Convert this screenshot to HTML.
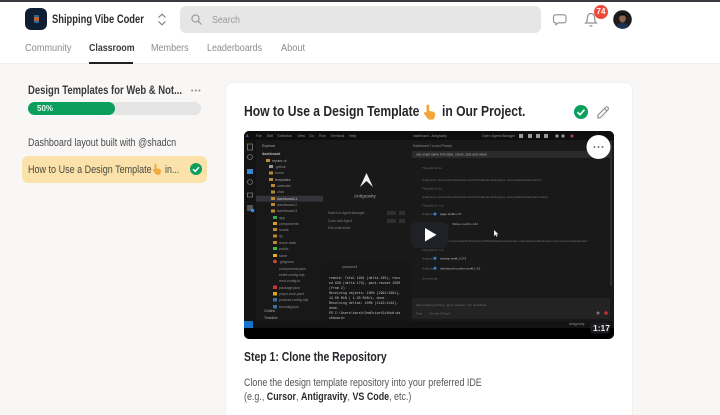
<!DOCTYPE html>
<html><head><meta charset="utf-8"><style>
*{box-sizing:border-box}
html,body{margin:0;padding:0;width:720px;height:415px;overflow:hidden;background:#f8f7f5;font-family:"Liberation Sans",sans-serif}
#w{position:absolute;left:0;top:0;width:720px;height:415px;overflow:hidden;filter:blur(.3px)}
.t{position:absolute;white-space:nowrap;transform-origin:0 50%;line-height:14px;height:14px}
.a{position:absolute}
svg{position:absolute;overflow:visible}
b{font-weight:700}
</style></head><body><div id="w">
<div class="a" style="left:0;top:0;width:720px;height:64px;background:#fff;border-bottom:1px solid #efefed"></div>
<div class="a" style="left:0;top:0;width:720px;height:1.5px;background:#3a3a40"></div>
<div class="a" style="left:25px;top:8px;width:22px;height:22px;border-radius:6px;background:#101e33"></div>
<div class="a" style="left:33.500px;top:17px;width:5px;height:4px;background:#b9623a;box-shadow:0 -2px 0 #2d6390,0 2px 0 #2d6390"></div>
<div class="t" style="left:52px;top:12px;font-size:12px;font-weight:700;color:#2b2b2e;transform:scaleX(.78)">Shipping Vibe Coder</div>
<svg style="left:157px;top:13px" width="10" height="13" fill="none" stroke="#777" stroke-width="1.100"><path d="M1.500 4.500 5 1.200 8.500 4.500M1.500 8.500 5 11.800 8.500 8.500"/></svg>
<div class="a" style="left:180px;top:6px;width:361px;height:27px;border-radius:6px;background:#e6e6e6"></div>
<svg style="left:191px;top:14px" width="11" height="11" fill="none" stroke="#949494" stroke-width="1.100"><circle cx="4.500" cy="4.500" r="3.600"/><path d="M7.200 7.200 10.500 10.500"/></svg>
<div class="t" style="left:212px;top:12.500px;font-size:10.500px;color:#9a9a9a;transform:scaleX(.84)">Search</div>
<svg style="left:553px;top:13.500px" width="14" height="12" fill="none" stroke="#8f8f8f" stroke-width="1.100"><path d="M2.500.8h8.500a2 2 0 0 1 2 2v4a2 2 0 0 1-2 2H5.500l-2.600 2V8.800h-.4a2 2 0 0 1-2-2V2.800a2 2 0 0 1 2-2z"/></svg>
<svg style="left:585px;top:12px" width="12" height="15" fill="none" stroke="#8f8f8f" stroke-width="1.200"><path d="M.8 11c1.100-1 1.500-2 1.500-4.600 0-2.800 1.500-4.900 3.700-4.900s3.700 2.100 3.700 4.900c0 2.600.4 3.600 1.500 4.600z"/><path d="M4.600 13.500q1.400 1 2.800 0"/></svg>
<div class="a" style="left:594px;top:5px;width:14px;height:14px;border-radius:50%;background:#ef4a39"></div>
<div class="t" style="left:594px;top:4.500px;width:14px;text-align:center;font-size:8px;font-weight:700;color:#fff">74</div>
<svg style="left:613px;top:10px" width="19" height="19"><defs><clipPath id="av"><circle cx="9.500" cy="9.500" r="9.300"/></clipPath></defs><g clip-path="url(#av)"><rect width="19" height="19" fill="#1e1c1b"/><ellipse cx="9.500" cy="8.500" rx="3.300" ry="4" fill="#8c6450"/><path d="M5.800 7Q6 3 9.500 3T13.200 7L12 5.500H7z" fill="#0e0d0d"/><path d="M2.500 19q.5-6 7-6T16.500 19z" fill="#1d3353"/></g></svg>

<div class="t" style="left:25px;top:41px;font-size:10.500px;color:#8d8d8d;transform:scaleX(.875)">Community</div>
<div class="t" style="left:89px;top:41px;font-size:10.500px;font-weight:700;color:#3a3a3d;transform:scaleX(.84)">Classroom</div>
<div class="t" style="left:151px;top:41px;font-size:10.500px;color:#8d8d8d;transform:scaleX(.86)">Members</div>
<div class="t" style="left:207px;top:41px;font-size:10.500px;color:#8d8d8d;transform:scaleX(.85)">Leaderboards</div>
<div class="t" style="left:281px;top:41px;font-size:10.500px;color:#8d8d8d;transform:scaleX(.875)">About</div>
<div class="a" style="left:89px;top:61.500px;width:44px;height:2.500px;background:#202024"></div>

<div class="t" style="left:28px;top:83px;font-size:12px;font-weight:700;color:#3a3a3d;transform:scaleX(.79)">Design Templates for Web &amp; Not...</div>
<svg style="left:191px;top:88.500px" width="10" height="3" fill="#8a8a8a"><circle cx="1.200" cy="1.500" r="1"/><circle cx="4.800" cy="1.500" r="1"/><circle cx="8.400" cy="1.500" r="1"/></svg>
<div class="a" style="left:28px;top:102px;width:173px;height:13px;border-radius:7px;background:#e4e4e4"></div>
<div class="a" style="left:28px;top:102px;width:87px;height:13px;border-radius:7px;background:#0a9f5c"></div>
<div class="t" style="left:37px;top:101.500px;font-size:8px;font-weight:700;color:#e8f7ef">50%</div>
<div class="t" style="left:28px;top:135.500px;font-size:11px;color:#4a4a4d;transform:scaleX(.815)">Dashboard layout built with @shadcn</div>
<div class="a" style="left:22px;top:156px;width:185px;height:27px;border-radius:6px;background:#fbe2ab"></div>
<div class="t" style="left:28px;top:162.500px;font-size:11px;color:#4a4a3e;transform:scaleX(.82)">How to Use a Design Template</div>
<svg style="left:152px;top:163px" width="10" height="12"><path d="M2.500 1.500c0-1.400 2-1.400 2 0v3.700l3 .8c1 .3 1.700 1 1.500 2.200l-.5 2.300c-.2.800-.8 1.300-1.600 1.300H5c-.7 0-1.300-.4-1.700-1L1 7.500c-.6-1 .7-2 1.500-1.100z" fill="#f1aa3f"/></svg>
<div class="t" style="left:165px;top:162.500px;font-size:11px;color:#4a4a3e;transform:scaleX(.8)">in...</div>
<svg style="left:190px;top:163px" width="12" height="12"><circle cx="6" cy="6" r="6" fill="#0a9f5c"/><path d="M3 6.200 5.200 8.300 9 4.200" fill="none" stroke="#fff" stroke-width="1.500"/></svg>

<div class="a" style="left:225px;top:82px;width:408px;height:340px;border-radius:8px;background:#fff;border:1px solid #f1f0ee"></div>
<div class="t" style="left:244px;top:105px;font-size:14.500px;font-weight:700;color:#26262b;transform:scaleX(.835)">How to Use a Design Template</div>
<svg style="left:423px;top:104px" width="14" height="16"><path d="M3.500 1.800c0-1.800 2.700-1.800 2.700 0v5l4 1c1.300.4 2.300 1.400 2 3l-.7 3c-.2 1-1 1.800-2.100 1.800H6.500c-1 0-1.700-.5-2.200-1.300L1.200 10c-.8-1.300 1-2.700 2.300-1.500z" fill="#f1a63b"/></svg>
<div class="t" style="left:441.500px;top:105px;font-size:14.500px;font-weight:700;color:#26262b;transform:scaleX(.835)">in Our Project.</div>
<svg style="left:574px;top:105px" width="14" height="14"><circle cx="7" cy="7" r="7" fill="#0a9f5c"/><path d="M3.500 7.300 6 9.700 10.500 4.700" fill="none" stroke="#fff" stroke-width="1.700"/></svg>
<svg style="left:597px;top:106px" width="13" height="13" fill="none" stroke="#8a8a8a" stroke-width="1.100"><path d="M1 9 8.500 1.500a1.500 1.500 0 0 1 2.500 2.300L3.500 11.500 .8 12z"/><path d="M7.500 2.500 10 5"/></svg>

<div class="a" style="left:244px;top:131px;width:370px;height:208px;border-radius:5px;background:#000;overflow:hidden">
<svg style="left:0;top:0;filter:blur(.35px)" width="370" height="208" font-family="Liberation Sans" font-size="3.600" fill="#8c8c8c">
<rect width="370" height="197" fill="#181818"/>
<rect y="0" width="370" height="9" fill="#0e0e0e"/>
<rect x="0" y="9" width="12" height="181" fill="#141414"/>
<rect x="79" y="9" width="88" height="181" fill="#191919"/>
<rect x="167" y="9" width="203" height="181" fill="#191919"/>
<rect x="12" y="64.700" width="67" height="6" fill="#33333a"/>
<rect x="79" y="131" width="88" height="59" fill="#171717"/>
<rect x="0" y="190" width="370" height="7" fill="#141414"/>
<rect x="0" y="190" width="9" height="7" fill="#1874c8"/>
<rect x="168" y="20" width="198" height="7" fill="#2b2b2b"/>
<rect x="168" y="167" width="198" height="21" rx="2" fill="#232323"/>
<rect x="366" y="10" width="2" height="145" fill="#2f2f2f"/>
<text x="2" y="6" fill="#4a90d8" font-weight="700">A</text>
<text x="12" y="6">File</text><text x="22.700" y="6">Edit</text><text x="33.300" y="6">Selection</text><text x="53.300" y="6">View</text><text x="65.300" y="6">Go</text><text x="75" y="6">Run</text><text x="86.700" y="6">Terminal</text><text x="105" y="6">Help</text>
<text x="169" y="6" font-size="3.300">dashboard - Antigravity</text>
<text x="238" y="6" font-size="3.500">Open Agent Manager</text>
<g fill="#999"><rect x="275" y="3" width="4" height="4"/><rect x="284" y="3" width="4" height="4"/><rect x="292" y="3" width="4" height="4"/><rect x="300" y="3" width="4" height="4"/><circle cx="313" cy="5" r="1.600"/><circle cx="319" cy="5" r="1.600"/><circle cx="328" cy="5" r="1.600" fill="#944"/></g>
<text x="18" y="16.200" fill="#aaa">Explorer</text>
<text x="18" y="24" font-weight="700" fill="#bbb">dashboard</text>
<text x="28" y="31" fill="#aaa">repare-ui</text>
<text x="31" y="37">.github</text>
<text x="31" y="43">home</text>
<text x="31" y="50" fill="#aaa">templates</text>
<text x="33" y="56">calendar</text>
<text x="33" y="62">chat</text>
<text x="33" y="69" fill="#ccc">dashboard-1</text>
<text x="33" y="75">dashboard-2</text>
<text x="33" y="81">dashboard-3</text>
<text x="35" y="88">app</text>
<text x="35" y="94">components</text>
<text x="35" y="100">hooks</text>
<text x="35" y="106.500">lib</text>
<text x="35" y="113">mock-data</text>
<text x="35" y="119">public</text>
<text x="35" y="126">store</text>
<text x="35" y="132">.gitignore</text>
<text x="35" y="139">components.json</text>
<text x="35" y="145">eslint.config.mjs</text>
<text x="35" y="151">next.config.ts</text>
<text x="35" y="158">package.json</text>
<text x="35" y="164">pnpm-lock.yaml</text>
<text x="35" y="170">postcss.config.mjs</text>
<text x="35" y="177">tsconfig.json</text>
<text x="20" y="181" fill="#aaa">Outline</text>
<text x="20" y="188" fill="#aaa">Timeline</text>
<g fill="#b88834"><rect x="22" y="28" width="4" height="3"/><rect x="25" y="40.500" width="4" height="3"/><rect x="25" y="47" width="4" height="3"/><rect x="27" y="53" width="4" height="3"/><rect x="27" y="59.500" width="4" height="3"/><rect x="27" y="66" width="4" height="3"/><rect x="27" y="72" width="4" height="3"/><rect x="27" y="78.500" width="4" height="3"/><rect x="29" y="91" fill="#d8a020" width="4" height="3"/><rect x="29" y="97" width="4" height="3"/><rect x="29" y="103.500" width="4" height="3"/><rect x="29" y="110" width="4" height="3"/><rect x="29" y="123" fill="#e0b020" width="4" height="3"/></g>
<rect x="25" y="34" width="4" height="3" fill="#999"/><rect x="29" y="85" width="4" height="3" fill="#2fa84f"/><rect x="29" y="116" width="4" height="3" fill="#3fb950"/><circle cx="31" cy="130.500" r="1.800" fill="#c94f3d"/><rect x="29" y="154.500" width="4" height="3.500" fill="#c33"/><rect x="29" y="161" width="4" height="3.500" fill="#d9a520"/><rect x="29" y="167" width="4" height="3.500" fill="#3a6ea5"/><rect x="29" y="174" width="4" height="3.500" fill="#3a6ea5"/>
<g fill="none" stroke="#7a7a7a" stroke-width=".8"><rect x="3.500" y="13" width="5" height="6"/><circle cx="6" cy="26" r="2.500"/><circle cx="6" cy="51" r="2.500"/><rect x="3.500" y="62" width="5" height="4"/></g>
<rect x="3" y="38" width="6" height="5" fill="#3b84c9"/><rect x="3" y="74" width="6" height="6" fill="#555"/><circle cx="8.500" cy="79.500" r="1.800" fill="#2f8fe6"/>
<path d="M116 56 122.500 42 129 56 122.500 50z" fill="#f2f2f2"/>
<text x="110" y="66.700" font-size="4.700" fill="#aaa">Antigravity</text>
<g font-size="3.300" fill="#7f7f7f"><text x="84" y="83.200">Switch to Agent Manager</text><text x="84" y="90.900">Code with Agent</text><text x="84" y="98.200">Edit code inline</text></g>
<g fill="#303030"><rect x="143" y="80" width="9" height="4"/><rect x="155" y="80" width="6" height="4"/><rect x="143" y="88" width="9" height="4"/><rect x="155" y="88" width="6" height="4"/></g>
<text x="98" y="137" font-size="3.200">powershell</text>
<g font-family="Liberation Mono" font-size="3.300" fill="#c4c4c4"><text x="85" y="148">remote: Total 1991 (delta 240), reus</text><text x="85" y="153">ed 939 (delta 179), pack-reused 1580</text><text x="85" y="158">(from 2)</text><text x="85" y="163">Receiving objects: 100% (1991/1991),</text><text x="85" y="168">12.06 MiB | 1.20 MiB/s, done.</text><text x="85" y="173">Resolving deltas: 100% (1142/1142),</text><text x="85" y="178">done.</text><text x="85" y="183">PS C:\Users\harsh\OneDrive\GitHub\da</text><text x="85" y="188">shboard&gt;</text></g>
<text x="169" y="16" font-size="3.200">Dashboard: I'm and Prompt</text>
<text x="172" y="24.700" font-size="3.300" fill="#aaa">use exact same font style, colors, size and value</text>
<g font-size="3.100" fill="#6e6e6e"><text x="178" y="38">Thought for 1s</text><text x="178" y="50">Analyzed c:\Users\harsh\OneDrive\GitHub\dashboard\square-ui\templates\dashboard-1</text><text x="178" y="58.500">Thought for 1s</text><text x="178" y="67">Analyzed c:\Users\harsh\OneDrive\GitHub\dashboard\square-ui\templates\dashboard-1\app</text><text x="178" y="75.500">Thought for &lt;1s</text><text x="178" y="84">Analyzed</text><text x="196" y="84" fill="#bbb">page.tsx#L1-70</text><text x="208" y="94" fill="#aaa">Tables.csv#L1-122</text><text x="204" y="111">c:\Users\harsh\OneDrive\GitHub\dashboard\square-ui\templates\dashboard-1\components\dashboard</text><text x="178" y="120">Thought for &lt;1s</text><text x="178" y="128.500">Analyzed</text><text x="196" y="128.500" fill="#bbb">sidebar.tsx#L1-273</text><text x="178" y="138.500">Analyzed</text><text x="196" y="138.500" fill="#bbb">dashboard-content.tsx#L1-10</text><text x="178" y="148.500">Generating</text><text x="172" y="175">Ask anything (Ctrl+L), @ to mention, / for workflows</text><text x="172" y="183.300">Fast</text><text x="185" y="183.300">Gemini 3 Flash</text></g>
<circle cx="191" cy="83" r="1.500" fill="#2f7fd0"/><circle cx="191" cy="127.300" r="1.500" fill="#2f7fd0"/><circle cx="191" cy="137.300" r="1.500" fill="#2f7fd0"/>
<circle cx="362" cy="182" r="1.800" fill="#b33"/><circle cx="354" cy="182" r="1.500" fill="#777"/>
<text x="325" y="194.200" font-size="3.300">Antigravity</text>
<path d="M250 99v6l1.500-1.200 1 2 1-.5-1-2h2z" fill="#eee"/>
<rect x="167" y="91" width="37" height="26" rx="6" fill="#202027"/>
<path d="M181 97v13.500L192.500 103.700z" fill="#fff"/>
<circle cx="354.500" cy="16" r="12" fill="#fff"/>
<g fill="#777"><circle cx="350.500" cy="16" r="1"/><circle cx="354.500" cy="16" r="1"/><circle cx="358.500" cy="16" r="1"/></g>
<rect x="346.500" y="191.500" width="19" height="11" rx="2.500" fill="#1c1e22"/>
<text x="349" y="200" font-size="8.500" font-weight="700" fill="#e8e8e8">1:17</text>
</svg>
</div>

<div class="t" style="left:244px;top:349.500px;font-size:12.500px;font-weight:700;color:#26262b;transform:scaleX(.835)">Step 1: Clone the Repository</div>
<div class="t" style="left:244px;top:376px;font-size:11px;color:#555;transform:scaleX(.81)">Clone the design template repository into your preferred IDE</div>
<div class="t" style="left:244px;top:389.500px;font-size:11px;color:#555;transform:scaleX(.81)">(e.g., <b style="color:#2b2b2e">Cursor</b>, <b style="color:#2b2b2e">Antigravity</b>, <b style="color:#2b2b2e">VS Code</b>, etc.)</div>
</div></body></html>
